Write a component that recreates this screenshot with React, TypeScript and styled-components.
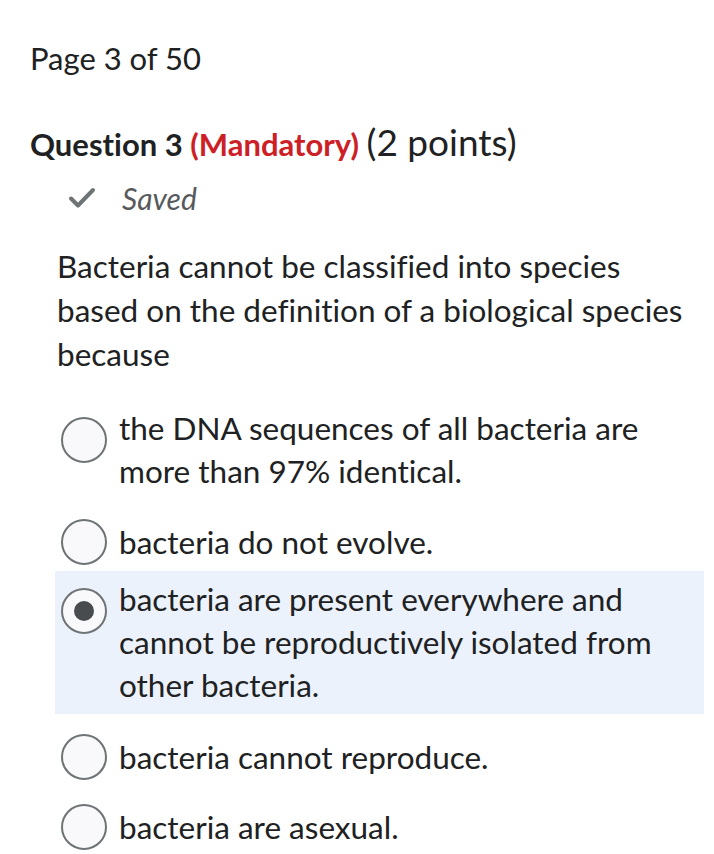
import React from "react";
import styled, { createGlobalStyle } from "styled-components";

const Global = createGlobalStyle`
  html, body { margin: 0; padding: 0; background: #ffffff; }
  body {
    font-family: Lato, "Open Sans", sans-serif;
    color: #202122;
    font-variant-ligatures: none;
  }
`;

const Page = styled.div`
  padding: 40px 10px 0 30px;
  display: flex;
  flex-direction: column;
`;

const PageLabel = styled.div`
  font-size: 31px;
  line-height: 36px;
  color: #202122;
`;

const Heading = styled.h2`
  margin: 48px 0 0 0;
  font-size: 31px;
  line-height: 36px;
  font-weight: 700;
  color: #202122;
`;

const Mandatory = styled.span`
  color: #cd2026;
`;

const Points = styled.span`
  font-weight: 400;
  font-size: 37px;
`;

const SavedRow = styled.div`
  display: flex;
  align-items: center;
  gap: 26px;
  margin: 18px 0 0 38px;
  height: 36px;
`;

const SavedText = styled.span`
  font-style: italic;
  font-size: 30px;
  color: #565a5c;
`;

const Prompt = styled.p`
  margin: 28px 0 0 27px;
  font-size: 31.5px;
  line-height: 44px;
`;

const Options = styled.div`
  display: flex;
  flex-direction: column;
  margin: 24px 0 0 25px;
`;

const Option = styled.label<{ $selected?: boolean; $space: number }>`
  display: flex;
  align-items: flex-start;
  gap: 12px;
  padding: 7px 6px;
  margin-top: ${(p) => p.$space}px;
  background: ${(p) => (p.$selected ? "#ecf2fb" : "transparent")};
`;

const Radio = styled.span<{ $multi?: boolean }>`
  flex: 0 0 auto;
  width: 46px;
  height: 46px;
  box-sizing: border-box;
  border: 2px solid #6e7376;
  border-radius: 50%;
  background: #f9f9fc;
  margin-top: ${(p) => (p.$multi ? 10 : -2)}px;
  display: flex;
  align-items: center;
  justify-content: center;
`;

const Dot = styled.span`
  width: 20px;
  height: 20px;
  border-radius: 50%;
  background: #494c4e;
`;

const OptionText = styled.span`
  font-size: 31.5px;
  line-height: 43px;
  color: #202122;
`;

const options = [
  { text: "the DNA sequences of all bacteria are more than 97% identical.", multi: true, space: 0 },
  { text: "bacteria do not evolve.", multi: false, space: 14 },
  { text: "bacteria are present everywhere and cannot be reproductively isolated from other bacteria.", multi: true, space: -1, selected: true },
  { text: "bacteria cannot reproduce.", multi: false, space: 15 },
  { text: "bacteria are asexual.", multi: false, space: 12 },
];

export default function App() {
  return (
    <>
      <Global />
      <Page>
        <PageLabel>Page 3 of 50</PageLabel>
        <Heading>
          Question 3 <Mandatory>(Mandatory)</Mandatory> <Points>(2 points)</Points>
        </Heading>
        <SavedRow>
          <svg width="28" height="22" viewBox="0 0 28 22">
            <path d="M3 11.5 L10 18.5 L25 3" fill="none" stroke="#6e7376" strokeWidth="4" strokeLinecap="round" strokeLinejoin="round" />
          </svg>
          <SavedText>Saved</SavedText>
        </SavedRow>
        <Prompt>
          Bacteria cannot be classified into species based on the definition of a biological species because
        </Prompt>
        <Options>
          {options.map((o, i) => (
            <Option key={i} $selected={o.selected} $space={o.space}>
              <Radio $multi={o.multi}>{o.selected && <Dot />}</Radio>
              <OptionText>{o.text}</OptionText>
            </Option>
          ))}
        </Options>
      </Page>
    </>
  );
}
